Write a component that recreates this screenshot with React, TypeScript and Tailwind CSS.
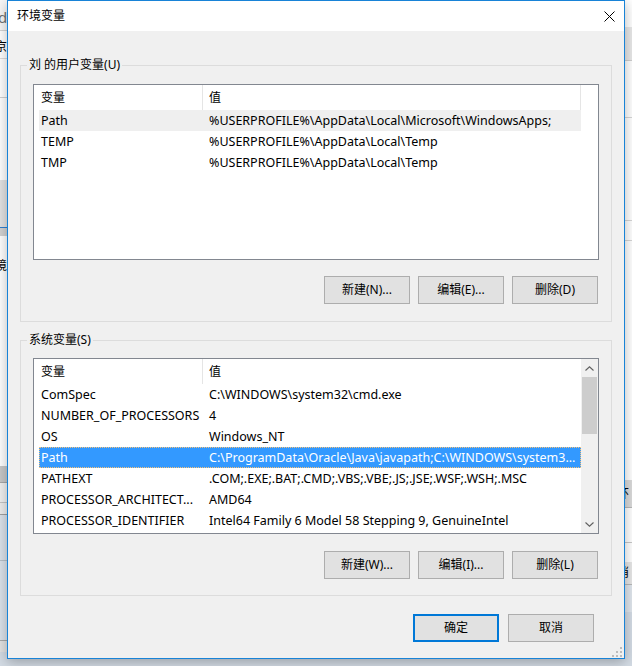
import type { ReactNode } from 'react';

type Row = { name: string; value: string };

const USER_VARS: Row[] = [
  { name: 'Path', value: '%USERPROFILE%\\AppData\\Local\\Microsoft\\WindowsApps;' },
  { name: 'TEMP', value: '%USERPROFILE%\\AppData\\Local\\Temp' },
  { name: 'TMP', value: '%USERPROFILE%\\AppData\\Local\\Temp' },
];

const SYSTEM_VARS: Row[] = [
  { name: 'ComSpec', value: 'C:\\WINDOWS\\system32\\cmd.exe' },
  { name: 'NUMBER_OF_PROCESSORS', value: '4' },
  { name: 'OS', value: 'Windows_NT' },
  { name: 'Path', value: 'C:\\ProgramData\\Oracle\\Java\\javapath;C:\\WINDOWS\\system3...' },
  { name: 'PATHEXT', value: '.COM;.EXE;.BAT;.CMD;.VBS;.VBE;.JS;.JSE;.WSF;.WSH;.MSC' },
  { name: 'PROCESSOR_ARCHITECT...', value: 'AMD64' },
  { name: 'PROCESSOR_IDENTIFIER', value: 'Intel64 Family 6 Model 58 Stepping 9, GenuineIntel' },
];

function Btn({ children, primary, className = '' }: { children: ReactNode; primary?: boolean; className?: string }) {
  return (
    <button
      className={
        (primary
          ? 'flex h-[28px] w-[86px] items-center justify-center border-2 border-[#0078d7] bg-[#e1e1e1] text-[12px] leading-none text-black '
          : 'flex h-[28px] w-[86px] items-center justify-center border border-[#adadad] bg-[#e1e1e1] text-[12px] leading-none text-black ') + className
      }
    >
      {children}
    </button>
  );
}

function Scrollbar() {
  return (
    <div className="flex w-[17px] flex-col bg-[#f0f0f0]">
      <div className="flex h-[17px] items-center justify-center pt-[2px]">
        <svg width="9" height="5" viewBox="0 0 9 5">
          <path d="M0.5 4.5 L4.5 0.8 L8.5 4.5" fill="none" stroke="#606060" strokeWidth="1.1" />
        </svg>
      </div>
      <div className="flex-1 px-[1px]">
        <div className="mt-[1px] h-[57px] bg-[#cdcdcd]" />
      </div>
      <div className="flex h-[17px] items-center justify-center">
        <svg width="9" height="5" viewBox="0 0 9 5">
          <path d="M0.5 0.5 L4.5 4.2 L8.5 0.5" fill="none" stroke="#606060" strokeWidth="1.1" />
        </svg>
      </div>
    </div>
  );
}

function VarList({ rows, selected, focused, scroll }: { rows: Row[]; selected: number; focused?: boolean; scroll?: boolean }) {
  return (
    <div className="flex h-[176px] border border-[#828790] bg-white">
      <div className="flex w-[547px] flex-col">
        <div className="flex h-[25px] text-[12px] text-black">
          <div className="flex w-[169px] items-center border-r border-[#e5e5e5] pl-[7px]">变量</div>
          <div className={scroll ? 'flex flex-1 items-center pl-[6px]' : 'flex flex-1 items-center border-r border-[#e5e5e5] pl-[6px]'}>值</div>
        </div>
        {rows.map((r, i) => {
          const sel = i === selected;
          const cls = sel
            ? focused
              ? 'ml-[5px] flex h-[21px] bg-[#3399ff] text-white outline-1 -outline-offset-1 outline-dotted outline-[#f6c27a]'
              : 'ml-[5px] flex h-[21px] bg-[#efefef] text-black'
            : 'ml-[5px] flex h-[21px] text-black';
          return (
            <div key={r.name + i} className={cls}>
              <div className="w-[163px] truncate whitespace-nowrap pl-[2px] text-[12.5px] leading-[21px]">{r.name}</div>
              <div className="flex-1 truncate whitespace-nowrap pl-[7px] text-[12.5px] leading-[21px]">{r.value}</div>
            </div>
          );
        })}
      </div>
      {scroll && <Scrollbar />}
    </div>
  );
}

function Group({ title, children, className }: { title: string; children: ReactNode; className: string }) {
  return (
    <fieldset className={className}>
      <legend className="-ml-[6px] px-[2px] text-[12px] leading-[18px] text-black">{title}</legend>
      {children}
    </fieldset>
  );
}

function LeftBackdrop() {
  return (
    <div className="absolute left-0 top-0 flex h-[652px] w-[40px] flex-col bg-white">
      <div className="h-[30px] overflow-hidden bg-[#f7f7f7] pt-[8px] text-[15px] leading-[18px] text-[#707070]">
        <span className="-ml-[2px]">d</span>
      </div>
      <div className="h-px bg-[#d4d4d4]" />
      <div className="h-[27px] overflow-hidden pt-[8px] text-[12px] leading-[16px] text-black">
        <span className="-ml-[5px]">京</span>
      </div>
      <div className="h-px bg-[#dcdcdc]" />
      <div className="h-[38px]" />
      <div className="h-px bg-[#d0d0d0]" />
      <div className="h-[82px]" />
      <div className="h-[47px] bg-[#e3e3e3]" />
      <div className="h-px bg-[#2f7fd0]" />
      <div className="h-[8px] bg-[#d2d2d2]" />
      <div className="h-[22px]" />
      <div className="h-[16px] overflow-hidden text-[12px] leading-[16px] text-black">
        <span className="-ml-[5px]">境</span>
      </div>
      <div className="h-[192px]" />
      <div className="h-[16px] bg-[#c8c8c8]" />
      <div className="h-px bg-[#a8a8a8]" />
      <div className="h-[19px] bg-[#f0f0f0]" />
      <div className="h-px bg-[#c4c4c4]" />
      <div className="h-[11px] bg-[#ededed]" />
      <div className="h-px bg-[#a0a0a0]" />
      <div className="h-[45px] bg-[#dbe2ea]" />
      <div className="h-px bg-[#b8c0c8]" />
      <div className="h-[79px] bg-[#dbe2ea]" />
      <div className="h-px bg-[#a8a8a8]" />
      <div className="flex-1 bg-[#e2e2e2]" />
    </div>
  );
}

function RightBackdrop() {
  return (
    <div className="absolute right-0 top-0 flex h-[612px] w-[40px] flex-col bg-white">
      <div className="h-[27px]" />
      <div className="h-[33px] bg-[#e8e8e8]" />
      <div className="h-px bg-[#cfcfcf]" />
      <div className="h-[56px]" />
      <div className="h-px bg-[#d6d6d6]" />
      <div className="h-[102px]" />
      <div className="h-px bg-[#d6d6d6]" />
      <div className="h-[19px]" />
      <div className="h-px bg-[#d6d6d6]" />
      <div className="h-[239px]" />
      <div className="flex h-[27px] items-center justify-end overflow-hidden bg-[#dadada] text-[12px] text-black">
        <span className="mr-[3px]">环</span>
      </div>
      <div className="h-px bg-[#b8b8b8]" />
      <div className="h-[34px]" />
      <div className="h-px bg-[#c8c8c8]" />
      <div className="h-[19px]" />
      <div className="flex h-[22px] items-center justify-end overflow-hidden bg-[#e6e6e6] text-[12px] text-black">
        <span className="mr-[3px]">消</span>
      </div>
      <div className="h-px bg-[#b8b8b8]" />
      <div className="flex-1 bg-[#dfe5ec]" />
    </div>
  );
}

export default function App() {
  return (
    <div className="relative h-[666px] w-[632px] overflow-hidden bg-[#d3dbe4] font-['Microsoft_YaHei_UI','Noto_Sans','Noto_Sans_CJK_SC',sans-serif]">
      <LeftBackdrop />
      <RightBackdrop />

      {/* dialog window */}
      <div className="absolute left-[7px] top-0 flex h-[659px] w-[618px] flex-col border border-[#1883d7] bg-[#f0f0f0] shadow-[0_3px_12px_rgba(0,0,0,0.28)]">
        <div className="flex h-[30px] items-center justify-between bg-white pl-[9px] pr-[9px]">
          <span className="text-[12px] text-black">环境变量</span>
          <svg width="11" height="11" viewBox="0 0 11 11">
            <path d="M0.5 0.5 L10.5 10.5 M10.5 0.5 L0.5 10.5" stroke="#000" strokeWidth="1" />
          </svg>
        </div>

        <div className="flex flex-col px-[12px]">
          <Group title="刘 的用户变量(U)" className="mt-[25px] border border-[#dcdcdc] px-[12px] pb-[17px] pt-[10px]">
            <VarList rows={USER_VARS} selected={0} />
            <div className="mr-[1px] mt-[16px] flex justify-end gap-[8px]">
              <Btn>新建(N)...</Btn>
              <Btn>编辑(E)...</Btn>
              <Btn>删除(D)</Btn>
            </div>
          </Group>

          <Group title="系统变量(S)" className="mt-[9px] border border-[#dcdcdc] px-[12px] pb-[16px] pt-[9px]">
            <VarList rows={SYSTEM_VARS} selected={3} focused scroll />
            <div className="mr-[1px] mt-[17px] flex justify-end gap-[8px]">
              <Btn>新建(W)...</Btn>
              <Btn>编辑(I)...</Btn>
              <Btn>删除(L)</Btn>
            </div>
          </Group>

          <div className="mr-[18px] mt-[18px] flex justify-end gap-[9px]">
            <Btn primary>确定</Btn>
            <Btn>取消</Btn>
          </div>
        </div>

        {/* size grip */}
        <svg className="absolute bottom-[1px] right-[2px]" width="10" height="10" viewBox="0 0 10 10">
          <rect x="8" y="0" width="2" height="2" fill="#bcbcbc" />
          <rect x="4" y="4" width="2" height="2" fill="#bcbcbc" />
          <rect x="8" y="4" width="2" height="2" fill="#bcbcbc" />
          <rect x="0" y="8" width="2" height="2" fill="#bcbcbc" />
          <rect x="4" y="8" width="2" height="2" fill="#bcbcbc" />
          <rect x="8" y="8" width="2" height="2" fill="#bcbcbc" />
        </svg>
      </div>
    </div>
  );
}
